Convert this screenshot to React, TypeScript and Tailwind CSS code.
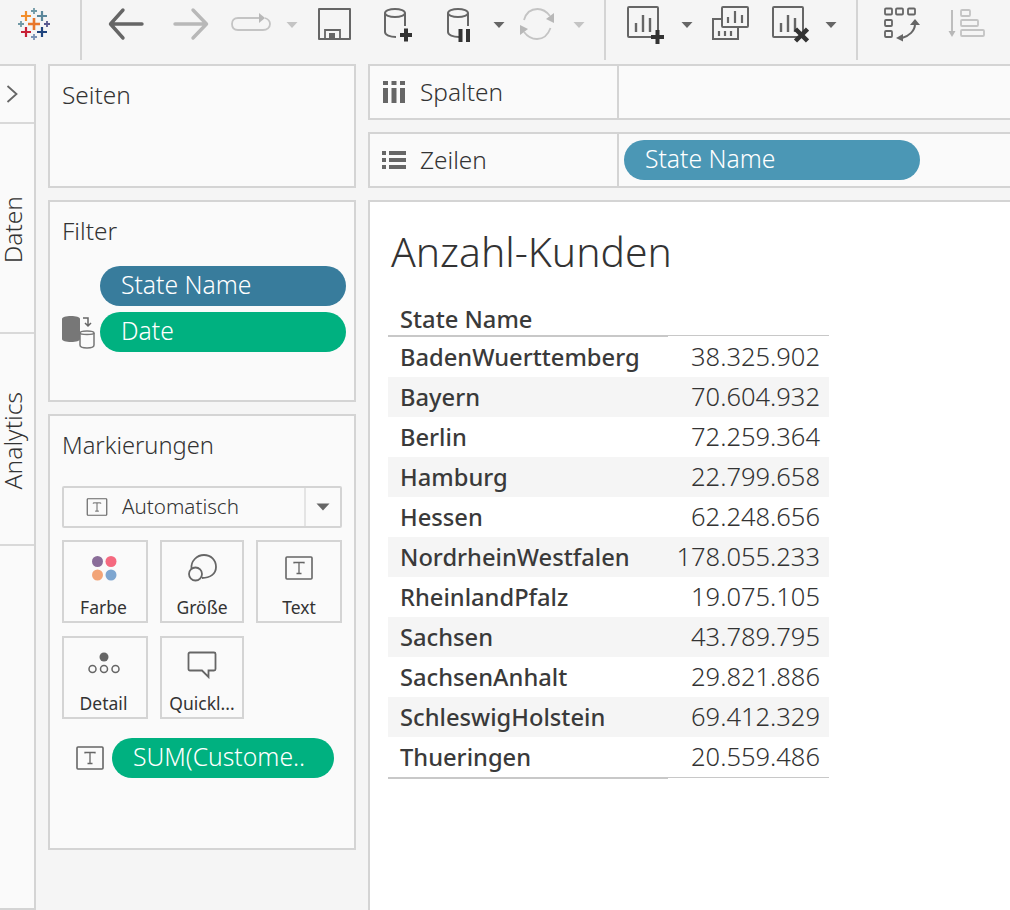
import React from 'react';

const rows = [
  ['BadenWuerttemberg', '38.325.902'],
  ['Bayern', '70.604.932'],
  ['Berlin', '72.259.364'],
  ['Hamburg', '22.799.658'],
  ['Hessen', '62.248.656'],
  ['NordrheinWestfalen', '178.055.233'],
  ['RheinlandPfalz', '19.075.105'],
  ['Sachsen', '43.789.795'],
  ['SachsenAnhalt', '29.821.886'],
  ['SchleswigHolstein', '69.412.329'],
  ['Thueringen', '20.559.486'],
];

function Plus({ x, y, r, w, c }: { x: number; y: number; r: number; w: number; c: string }) {
  return <path d={`M${x - r} ${y}H${x + r}M${x} ${y - r}V${y + r}`} stroke={c} strokeWidth={w} fill="none" />;
}

function Logo() {
  return (
    <svg width="36" height="48" viewBox="16 0 36 48" className="shrink-0">
      <Plus x={34} y={24} r={6} w={2.6} c="#e8762b" />
      <Plus x={26} y={16} r={5} w={2.2} c="#f28e2b" />
      <Plus x={42} y={16} r={5} w={2.2} c="#5b879b" />
      <Plus x={34} y={11} r={3} w={1.8} c="#7099a6" />
      <Plus x={21} y={24} r={3} w={1.8} c="#7099a6" />
      <Plus x={47} y={24} r={3} w={1.8} c="#59598f" />
      <Plus x={26} y={32} r={5} w={2.2} c="#c72035" />
      <Plus x={42} y={32} r={5} w={2.2} c="#1f447e" />
      <Plus x={34} y={37} r={3} w={1.8} c="#7b92b5" />
    </svg>
  );
}

function Caret({ light }: { light?: boolean }) {
  return (
    <svg width="12" height="48" viewBox="0 0 12 48" className="shrink-0">
      <path d="M0.5 22H11.5L6 28Z" fill={light ? '#c4c4c4' : '#666666'} />
    </svg>
  );
}

function Divider() {
  return <div className="h-[60px] w-[2px] shrink-0 self-start bg-[#d4d4d4]" />;
}

function Icon({ w, children, className }: { w: number; children: React.ReactNode; className?: string }) {
  return (
    <svg width={w} height="48" viewBox={`0 0 ${w} 48`} fill="none" className={`shrink-0 ${className ?? ''}`}>
      {children}
    </svg>
  );
}

function Cylinder({ x }: { x: number }) {
  return (
    <>
      <ellipse cx={x + 11} cy={13} rx={10} ry={4} stroke="#666666" strokeWidth="2" />
      <path d={`M${x + 1} 13V32C${x + 1} 35 ${x + 6} 37 ${x + 12} 37M${x + 21} 13V26`} stroke="#666666" strokeWidth="2" />
    </>
  );
}

function Bars({ x, y }: { x: number; y: number }) {
  return (
    <>
      <rect x={x} y={y} width="30" height="30" rx="1" stroke="#666666" strokeWidth="2" />
      <path d={`M${x + 8} ${y + 25}V${y + 16}M${x + 15} ${y + 25}V${y + 8}M${x + 22} ${y + 25}V${y + 11}`} stroke="#666666" strokeWidth="2.4" />
    </>
  );
}

function TextBox({ s = 20 }: { s?: number }) {
  return (
    <svg width={s + 8} height={s + 4} viewBox="0 0 28 24" fill="none" className="shrink-0">
      <rect x="1" y="1" width="26" height="22" rx="1" stroke="#666666" strokeWidth="1.6" />
      <path d="M9 7.5V6.5H19V7.5M14 6.5V17.5M11.5 17.5H16.5" stroke="#666666" strokeWidth="1.3" />
    </svg>
  );
}

function Toolbar() {
  return (
    <div className="flex h-[64px] shrink-0 items-start bg-[#f5f5f5]">
      <div className="ml-[16px]"><Logo /></div>
      <div className="ml-[28px]"><Divider /></div>
      <Icon w={36} className="ml-[26px]">
        <path d="M3 24H34M15 10L2.5 24L15 38" stroke="#666666" strokeWidth="3.4" strokeLinecap="round" strokeLinejoin="round" />
      </Icon>
      <Icon w={36} className="ml-[29px]">
        <path d="M2 24H33M20 10L33.5 24L20 38" stroke="#b8b8b8" strokeWidth="3.4" strokeLinecap="round" strokeLinejoin="round" />
      </Icon>
      <Icon w={40} className="ml-[22px]">
        <path d="M30 18H7C3 18 1 20.5 1 24C1 27.500 3 30 7 30H32C36 30 39 27.500 39 24C39 21 37 19 34 18" stroke="#c4c4c4" strokeWidth="1.8" />
        <path d="M28 13L34 18L28 23Z" fill="#b8b8b8" />
      </Icon>
      <div className="ml-[15px]"><Caret light /></div>
      <Icon w={33} className="ml-[20px]">
        <path d="M1 9H32V39H1Z" stroke="#666666" strokeWidth="2" strokeLinejoin="round" />
        <path d="M7 39V30H22V39" stroke="#666666" strokeWidth="1.800" />
        <rect x="11" y="33" width="6" height="6" fill="#666666" />
      </Icon>
      <Icon w={30} className="ml-[32px]">
        <Cylinder x={1} />
        <path d="M17 35H29M23 28.500V41.500" stroke="#333333" strokeWidth="4" />
      </Icon>
      <Icon w={26} className="ml-[33px]">
        <Cylinder x={1} />
        <path d="M14.500 29V42M22 29V42" stroke="#333333" strokeWidth="4" />
      </Icon>
      <div className="ml-[21px]"><Caret /></div>
      <Icon w={36} className="ml-[14px]">
        <path d="M5 20C7 13 12 9 18.500 9C24 9 28 12 31 16M31.500 28C29 35 24 39 18 39C12 39 8 36 5 32" stroke="#c4c4c4" strokeWidth="1.800" />
        <path d="M35 13V23L27 19ZM1 35V25L9 29Z" fill="#b8b8b8" />
      </Icon>
      <div className="ml-[18px]"><Caret light /></div>
      <div className="ml-[19px]"><Divider /></div>
      <Icon w={38} className="ml-[21px]">
        <Bars x={1} y={7} />
        <path d="M24 37H37M30.500 30V44" stroke="#333333" strokeWidth="4" />
      </Icon>
      <div className="ml-[16px]"><Caret /></div>
      <Icon w={37} className="ml-[19px]">
        <rect x="10" y="7" width="26" height="20" rx="1" stroke="#666666" strokeWidth="2" />
        <path d="M16 23V17M23 23V11M30 23V15" stroke="#666666" strokeWidth="2.2" />
        <path d="M10 19H1V39H26V27" stroke="#666666" strokeWidth="2" />
        <path d="M7 36V31M13 36V31M19 36V31" stroke="#666666" strokeWidth="2.2" />
      </Icon>
      <Icon w={37} className="ml-[23px]">
        <Bars x={1} y={7} />
        <path d="M23.500 29L35.500 41M35.500 29L23.500 41" stroke="#333333" strokeWidth="4.500" />
      </Icon>
      <div className="ml-[16px]"><Caret /></div>
      <div className="ml-[19px]"><Divider /></div>
      <Icon w={37} className="ml-[26px]">
        <g stroke="#666666" strokeWidth="1.800">
          <rect x="1" y="8.500" width="7" height="6" rx="1" />
          <rect x="12" y="8.500" width="7" height="6" rx="1" />
          <rect x="24" y="8.500" width="7" height="6" rx="1" />
          <rect x="1" y="20" width="7" height="6" rx="1" />
          <rect x="1" y="31" width="7" height="6" rx="1" />
        </g>
        <path d="M31 24C31 31 25 36 18 38" stroke="#666666" strokeWidth="2" />
        <path d="M26 25L31 19L36 25ZM19 34V41.500L12 38Z" fill="#666666" />
      </Icon>
      <Icon w={37} className="ml-[27px]">
        <path d="M4 10V33" stroke="#b8b8b8" strokeWidth="1.800" />
        <path d="M0.500 31H7.500L4 37Z" fill="#b8b8b8" />
        <g stroke="#c4c4c4" strokeWidth="1.800">
          <rect x="13" y="10" width="9" height="6" rx="1" />
          <rect x="13" y="20" width="17" height="6" rx="1" />
          <rect x="13" y="30" width="23" height="6" rx="1" />
        </g>
      </Icon>
    </div>
  );
}

function SideTab({ label, h }: { label: string; h: number }) {
  return (
    <div className="flex shrink-0 items-center justify-center border-b-2 border-[#d9d9d9] pr-[8px] pt-[3px]" style={{ height: h }}>
      <span className="rotate-180 text-[24.6px] font-light leading-none text-[#333333] [writing-mode:vertical-rl]">{label}</span>
    </div>
  );
}

function Sidebar() {
  return (
    <div className="flex w-[36px] shrink-0 flex-col border-y-2 border-r-2 border-[#d4d4d4] bg-[#fafafa]">
      <div className="flex h-[58px] shrink-0 items-center justify-center border-b-2 border-[#d9d9d9] pr-[10px]">
        <svg width="12" height="18" viewBox="0 0 12 18" fill="none">
          <path d="M1.500 1L10.500 9L1.500 17" stroke="#666666" strokeWidth="1.800" />
        </svg>
      </div>
      <SideTab label="Daten" h={210} />
      <SideTab label="Analytics" h={212} />
    </div>
  );
}

function Pill({ label, className }: { label: string; className: string }) {
  return (
    <div className={`flex h-[40px] items-center rounded-[20px] pb-[2px] pl-[21px] text-[24.7px] font-light leading-none text-white ${className}`}>{label}</div>
  );
}

function Card({ label, icon, className, inner }: { label: string; icon: React.ReactNode; className: string; inner?: string }) {
  return (
    <div className={`flex h-[83px] flex-col items-center border-2 border-[#d4d4d4] ${className}`}>
      <div className={`flex h-[53px] items-center pb-[1px] ${inner ?? ''}`}>{icon}</div>
      <span className={`text-[17.5px] leading-[24px] text-[#333333] ${inner ?? ''}`}>{label}</span>
    </div>
  );
}

function LeftPanels() {
  return (
    <div className="flex w-[308px] shrink-0 flex-col gap-[12px]">
      <div className="h-[124px] border-2 border-[#d4d4d4] bg-[#fafafa] pl-[12px] pt-[14px] text-[24.4px] font-light leading-[30px] text-[#333333]">Seiten</div>
      <div className="h-[202px] border-2 border-[#d4d4d4] bg-[#fafafa] pt-[14px]">
        <div className="pl-[12px] text-[24.4px] font-light leading-[30px] text-[#333333]">Filter</div>
        <div className="ml-[50px] mt-[20px] flex w-[246px] flex-col gap-[6px]">
          <Pill label="State Name" className="bg-[#387c9c]" />
          <div className="relative">
            <svg width="34" height="36" viewBox="0 0 34 36" fill="none" className="absolute left-[-39px] top-[3px]">
              <path d="M1 4C1 2 5 1 10 1S19 2 19 4V24C19 26 15 27 10 27S1 26 1 24Z" fill="#777777" />
              <path d="M22 3H27V10M24 8L27 11L30 8" stroke="#666666" strokeWidth="1.500" />
              <path d="M19 18C19 16.500 22 16 26 16S33 16.500 33 18V30C33 32 30 33 26 33S19 32 19 30Z" fill="#fafafa" stroke="#777777" strokeWidth="1.500" />
              <path d="M19 18C19 20 33 20 33 18" stroke="#777777" strokeWidth="1.500" />
            </svg>
            <Pill label="Date" className="bg-[#00b180]" />
          </div>
        </div>
      </div>
      <div className="h-[436px] border-2 border-[#d4d4d4] bg-[#fafafa] px-[12px] pt-[14px]">
        <div className="text-[23.7px] font-light leading-[30px] text-[#333333]">Markierungen</div>
        <div className="mt-[26px] flex h-[42px] w-[280px] items-center rounded-[2px] border-2 border-[#d4d4d4]">
          <div className="flex grow items-center pl-[22px]">
            <TextBox s={14} />
            <span className="mb-[2px] ml-[14px] text-[20.6px] font-light leading-none text-[#333333]">Automatisch</span>
          </div>
          <div className="flex h-full w-[36px] items-center justify-center border-l-2 border-[#e4e4e4]">
            <svg width="14" height="8" viewBox="0 0 14 8"><path d="M0.500 0.500H13.500L7 7.500Z" fill="#666666" /></svg>
          </div>
        </div>
        <div className="mt-[12px] flex gap-[12px]">
          <Card
            label="Farbe"
            className="w-[86px]"
            inner="pr-[3px]"
            icon={
              <svg width="26" height="26" viewBox="0 0 26 26">
                <circle cx="6.500" cy="6.500" r="5.500" fill="#8a6d99" />
                <circle cx="20" cy="6.500" r="5.500" fill="#f5697f" />
                <circle cx="6.500" cy="20" r="5.500" fill="#f2a477" />
                <circle cx="20" cy="20" r="5.500" fill="#7ea6d0" />
              </svg>
            }
          />
          <Card
            label="Größe"
            className="w-[84px]"
            icon={
              <svg width="30" height="28" viewBox="0 0 30 28" fill="none" stroke="#666666" strokeWidth="1.800">
                <path d="M4.500 15C3.500 7 10 1 17 1C24 1 29 6 29 13C29 20 23 24 15 24" />
                <circle cx="8.500" cy="20" r="6.500" />
              </svg>
            }
          />
          <Card label="Text" className="w-[86px]" icon={<TextBox s={20} />} />
        </div>
        <div className="mt-[13px] flex gap-[12px]">
          <Card
            label="Detail"
            className="w-[86px]"
            inner="pr-[3px]"
            icon={
              <svg width="32" height="26" viewBox="0 0 32 26" fill="none" stroke="#666666" strokeWidth="1.500" className="mt-[2px]">
                <circle cx="16" cy="5" r="4.500" fill="#666666" stroke="none" />
                <circle cx="4.500" cy="17" r="3.500" />
                <circle cx="16" cy="17" r="3.500" />
                <circle cx="27.500" cy="17" r="3.500" />
              </svg>
            }
          />
          <Card
            label="Quickl..."
            className="w-[84px]"
            icon={
              <svg width="30" height="28" viewBox="0 0 30 28" fill="none" className="mt-[2px]">
                <path d="M3 1.500H27C28 1.500 28.500 2 28.500 3V18C28.500 19 28 19.500 27 19.500H21.500V26L15 19.500H3C2 19.500 1.500 19 1.500 18V3C1.500 2 2 1.500 3 1.500Z" stroke="#666666" strokeWidth="1.800" />
              </svg>
            }
          />
        </div>
        <div className="ml-[14px] mt-[19px] flex items-center gap-[8px]">
          <TextBox s={20} />
          <Pill label="SUM(Custome.." className="w-[222px] bg-[#00b180]" />
        </div>
      </div>
    </div>
  );
}

function Shelf({ label, icon, children }: { label: string; icon: React.ReactNode; children?: React.ReactNode }) {
  return (
    <div className="flex h-[56px] border-y-2 border-l-2 border-[#d4d4d4] bg-[#fafafa]">
      <div className="flex w-[249px] shrink-0 items-center border-r-2 border-[#d4d4d4]">
        <div className="flex w-[50px] shrink-0 justify-center pr-[3px]">{icon}</div>
        <span className="text-[24.4px] font-light leading-none text-[#333333]">{label}</span>
      </div>
      <div className="flex grow items-center pl-[5px]">{children}</div>
    </div>
  );
}

function View() {
  return (
    <div className="grow border-l-2 border-t-2 border-[#d4d4d4] bg-white pl-[18px] pt-[26px]">
      <div className="pl-[3px] text-[40.8px] font-light leading-[46px] text-[#333333]">Anzahl-Kunden</div>
      <div className="mt-[23px] w-[441px]">
        <div className="flex h-[38px] items-center pl-[12px] pt-[7px] text-[23.7px] font-medium leading-none text-[#3a3a3a]">State Name</div>
        <div className="flex h-[2px] items-start">
          <div className="h-[2px] w-[280px] bg-[#c8c8c8]" />
          <div className="h-[1px] w-[161px] bg-[#c8c8c8]" />
        </div>
        {rows.map(([name, value], i) => (
          <div key={name} className={`flex h-[40px] items-center justify-between pl-[12px] pr-[9px] leading-none text-[#333333] ${i % 2 === 1 ? 'bg-[#f5f5f5]' : ''}`}>
            <span className="mt-[2px] text-[23.7px] font-medium text-[#3a3a3a]">{name}</span>
            <span className="text-[25.5px] font-light">{value}</span>
          </div>
        ))}
        <div className="flex h-[2px] items-start">
          <div className="h-[2px] w-[280px] bg-[#c8c8c8]" />
          <div className="h-[1px] w-[161px] bg-[#c8c8c8]" />
        </div>
      </div>
    </div>
  );
}

export default function App() {
  return (
    <div className="flex h-[910px] w-[1010px] flex-col overflow-hidden bg-[#f5f5f5] font-['Noto_Sans',sans-serif]">
      <Toolbar />
      <div className="flex grow gap-[12px]">
        <Sidebar />
        <LeftPanels />
        <div className="flex grow flex-col gap-[12px]">
          <Shelf
            label="Spalten"
            icon={
              <svg width="22" height="22" viewBox="0 0 22 22" fill="#666666">
                <rect x="0" y="0" width="5" height="4" />
                <rect x="8.500" y="0" width="5" height="4" />
                <rect x="17" y="0" width="5" height="4" />
                <rect x="0" y="7" width="5" height="15" />
                <rect x="8.500" y="7" width="5" height="15" />
                <rect x="17" y="7" width="5" height="15" />
              </svg>
            }
          />
          <Shelf
            label="Zeilen"
            icon={
              <svg width="24" height="20" viewBox="0 0 24 20" fill="#666666">
                <rect x="0" y="1" width="4" height="4" />
                <rect x="7" y="1" width="17" height="4" />
                <rect x="0" y="8" width="4" height="4" />
                <rect x="7" y="8" width="17" height="4" />
                <rect x="0" y="15" width="4" height="4" />
                <rect x="7" y="15" width="17" height="4" />
              </svg>
            }
          >
            <Pill label="State Name" className="w-[296px] bg-[#4b97b5]" />
          </Shelf>
          <View />
        </div>
      </div>
    </div>
  );
}
